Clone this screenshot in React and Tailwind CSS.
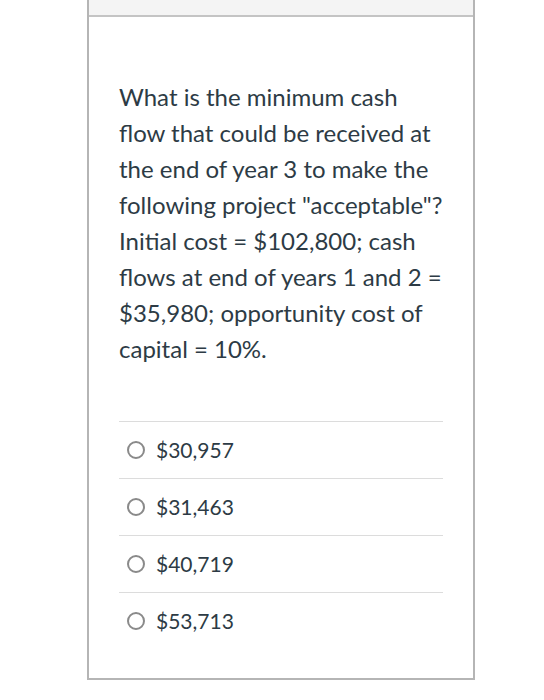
import React from 'react';

const options = ['$30,957', '$31,463', '$40,719', '$53,713'];

const App = () => {
    return (
        <div className="w-[544px] h-[700px] bg-white font-['Lato',sans-serif] text-[#2d3b45]">
            <div className="ml-[87px] w-[388px] h-[680px] border-x-2 border-b-2 border-[#b5b5b5] flex flex-col">
                <div className="h-[17px] shrink-0 bg-[#f4f4f4] border-b-2 border-[#c4c4c4]" />
                <div className="px-[30px] pt-[62px]">
                    <p className="text-[24px] leading-[36px] w-[327px]">
                        What is the minimum cash flow that could be received at the end of year 3 to make the following project "acceptable"? Initial cost = $102,800; cash flows at end of years 1 and 2 = $35,980; opportunity cost of capital = 10%.
                    </p>
                    <div className="mt-[54px] w-[324px]">
                        {options.map((opt) => (
                            <div key={opt} className="h-[57px] border-t border-[#dcdcdc] flex items-center pl-[8px] gap-[11px]">
                                <span className="w-[18px] h-[18px] rounded-full border-2 border-[#8a8a8a]" />
                                <span className="text-[21px]">{opt}</span>
                            </div>
                        ))}
                    </div>
                </div>
            </div>
        </div>
    );
};

export default App;
